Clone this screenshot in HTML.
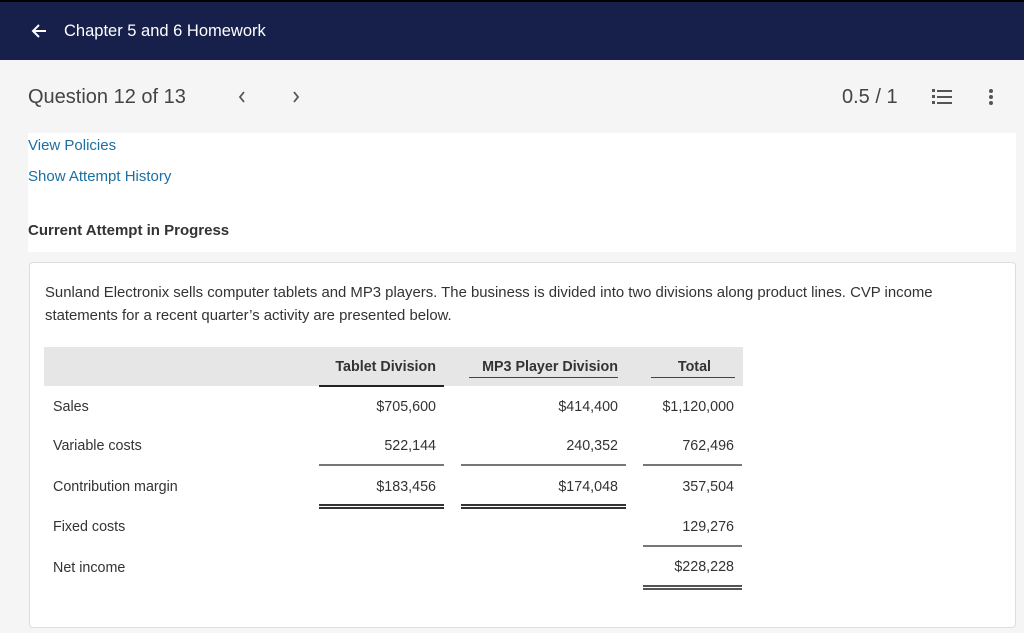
<!DOCTYPE html>
<html><head><meta charset="utf-8"><style>
*{margin:0;padding:0;box-sizing:border-box}
body{width:1024px;height:633px;background:#f5f5f5;font-family:"Liberation Sans",sans-serif;position:relative;overflow:hidden;color:#333}
.a{position:absolute;white-space:nowrap}
.hdr{position:absolute;left:0;top:0;width:1024px;height:60px;background:#16204a;border-top:2px solid #000}
.r{text-align:right}
.t{font-size:14.3px;color:#333}
.ln{position:absolute;height:2px;background:#777}
.dl{position:absolute;height:5px;border-top:2px solid #333;border-bottom:2px solid #333}
</style></head><body>
<div class="hdr"></div>
<svg class="a" style="left:30px;top:22px" width="18" height="18" viewBox="0 0 18 18"><path d="M16 9H3M9 3L3 9l6 6" stroke="#fff" stroke-width="2" fill="none"/></svg>
<div class="a" style="left:64px;top:22px;font-size:16.5px;color:#fff">Chapter 5 and 6 Homework</div>
<div class="a" style="left:28px;top:86px;font-size:20px;color:#444">Question 12 of 13</div>
<svg class="a" style="left:237px;top:90px" width="10" height="14"><path d="M7 2L3 7l4 5" stroke="#555" stroke-width="1.8" fill="none"/></svg>
<svg class="a" style="left:291px;top:90px" width="10" height="14"><path d="M3 2l4 5-4 5" stroke="#555" stroke-width="1.8" fill="none"/></svg>
<div class="a" style="left:842px;top:86px;font-size:20px;color:#444">0.5 / 1</div>
<svg class="a" style="left:930px;top:88px" width="24" height="18" viewBox="0 0 24 18"><g fill="#555"><rect x="7" y="2" width="15" height="2"/><rect x="7" y="8" width="15" height="2"/><rect x="7" y="14" width="15" height="2"/><rect x="2" y="1" width="3" height="3"/><rect x="2" y="7" width="3" height="3"/><rect x="2" y="13" width="3" height="3"/></g></svg>
<svg class="a" style="left:988px;top:88px" width="6" height="18"><circle cx="3" cy="3" r="2" fill="#555"/><circle cx="3" cy="9" r="2" fill="#555"/><circle cx="3" cy="15" r="2" fill="#555"/></svg>
<div class="a" style="left:28px;top:133px;width:988px;height:119px;background:#fff"></div>
<div class="a" style="left:28px;top:137px;font-size:15px;color:#1a6fa3">View Policies</div>
<div class="a" style="left:28px;top:168px;font-size:15px;color:#1a6fa3">Show Attempt History</div>
<div class="a" style="left:28px;top:222px;font-size:15px;font-weight:bold;color:#333">Current Attempt in Progress</div>
<div class="a" style="left:29px;top:262px;width:987px;height:366px;background:#fff;border:1px solid #ddd;border-radius:4px"></div>
<div class="a t" style="left:45px;top:282px;font-size:14.9px;line-height:23px;white-space:normal;width:930px">Sunland Electronix sells computer tablets and MP3 players. The business is divided into two divisions along product lines. CVP income statements for a recent quarter’s activity are presented below.</div>
<div class="a" style="left:44px;top:347px;width:699px;height:39px;background:#e6e6e6"></div>
<div class="a t r" style="left:300px;width:136px;top:359px;font-weight:bold">Tablet Division</div>
<div class="a t r" style="left:440px;width:178px;top:359px;font-weight:bold">MP3 Player Division</div>
<div class="a t r" style="left:640px;width:71px;top:359px;font-weight:bold">Total</div>
<div class="ln" style="left:319px;width:125px;top:385px;background:#222"></div>
<div class="ln" style="left:469px;width:149px;top:377px;background:#444;height:1px"></div>
<div class="ln" style="left:651px;width:84px;top:377px;background:#444;height:1px"></div>
<div class="a t" style="left:53px;top:399px">Sales</div>
<div class="a t r" style="left:300px;width:136px;top:399px">$705,600</div>
<div class="a t r" style="left:440px;width:178px;top:399px">$414,400</div>
<div class="a t r" style="left:600px;width:134px;top:399px">$1,120,000</div>
<div class="a t" style="left:53px;top:438px">Variable costs</div>
<div class="a t r" style="left:300px;width:136px;top:438px">522,144</div>
<div class="a t r" style="left:440px;width:178px;top:438px">240,352</div>
<div class="a t r" style="left:600px;width:134px;top:438px">762,496</div>
<div class="ln" style="left:319px;width:125px;top:464px"></div>
<div class="ln" style="left:461px;width:165px;top:464px"></div>
<div class="ln" style="left:643px;width:99px;top:464px"></div>
<div class="a t" style="left:53px;top:479px">Contribution margin</div>
<div class="a t r" style="left:300px;width:136px;top:479px">$183,456</div>
<div class="a t r" style="left:440px;width:178px;top:479px">$174,048</div>
<div class="a t r" style="left:600px;width:134px;top:479px">357,504</div>
<div class="dl" style="left:319px;width:125px;top:504px"></div>
<div class="dl" style="left:461px;width:165px;top:504px"></div>
<div class="a t" style="left:53px;top:519px">Fixed costs</div>
<div class="a t r" style="left:600px;width:134px;top:519px">129,276</div>
<div class="ln" style="left:643px;width:99px;top:545px"></div>
<div class="a t" style="left:53px;top:560px">Net income</div>
<div class="a t r" style="left:600px;width:134px;top:559px">$228,228</div>
<div class="dl" style="left:643px;width:99px;top:585px;border-color:#555"></div>
</body></html>
